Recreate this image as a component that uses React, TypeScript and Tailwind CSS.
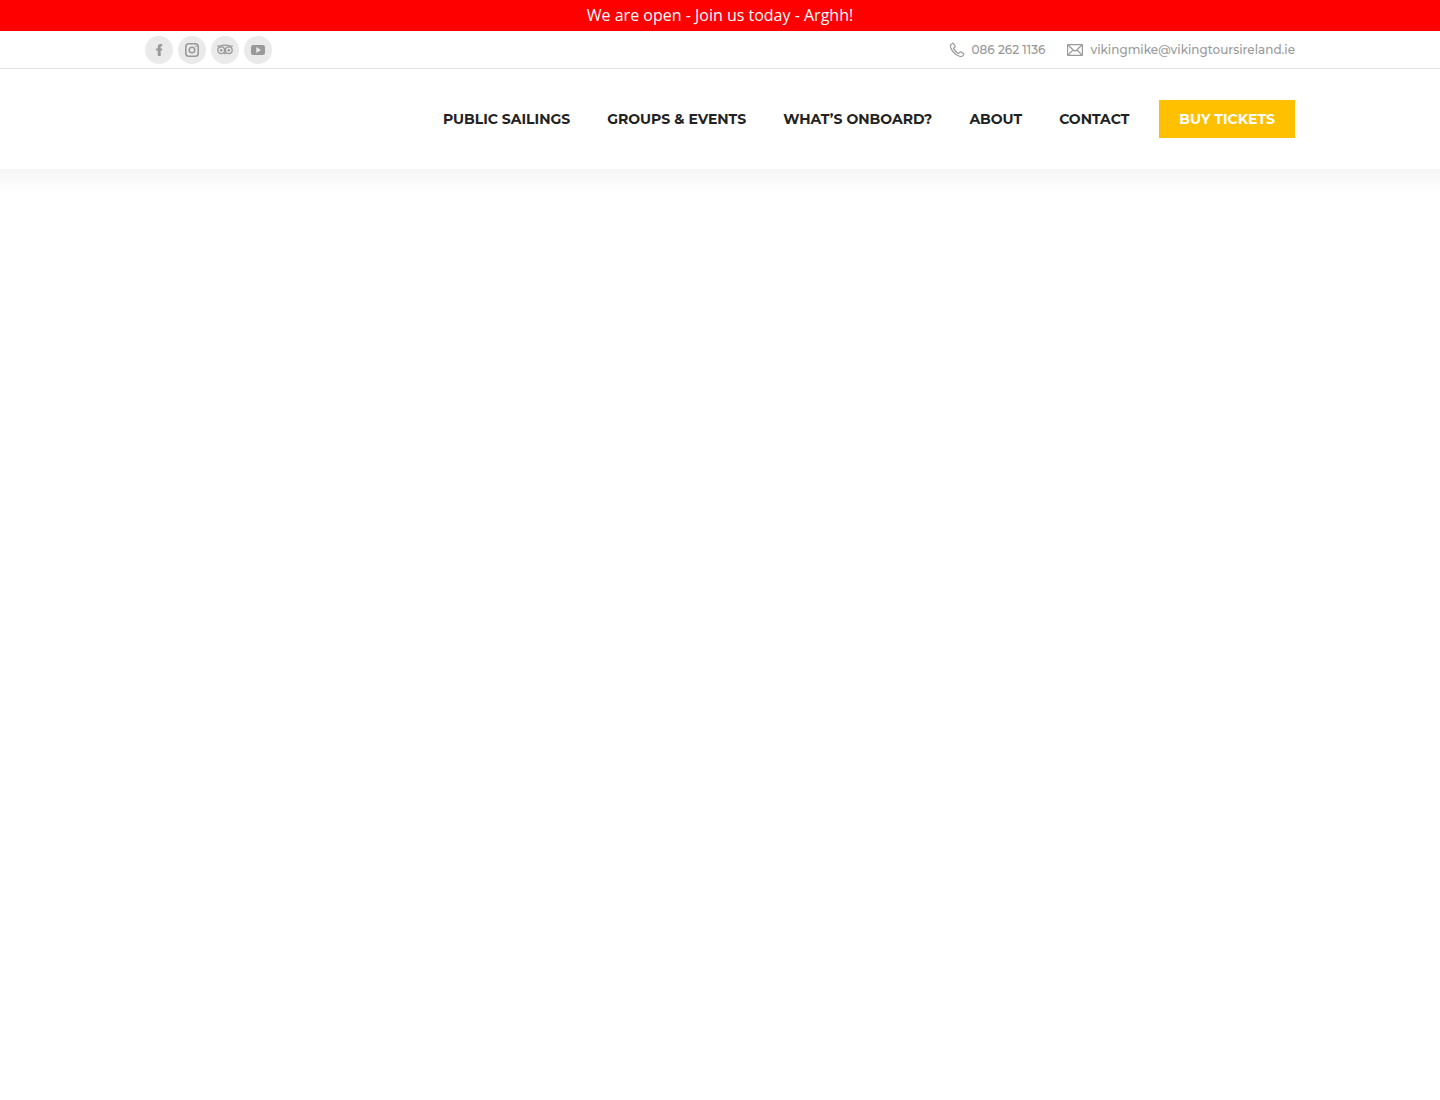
import type { ReactNode } from "react";

interface SocialLink {
  label: string;
  href: string;
  icon: ReactNode;
}

const socialLinks: SocialLink[] = [
  {
    label: "Facebook",
    href: "#facebook",
    icon: (
      <path
        fill="currentColor"
        d="M9.7 8.6V14H6.8V8.600H5V6.400h1.800V5.200C6.800 3 7.700 2 9.700 2H11.200v2.200H10.300c-.6 0-.7.3-.7.8v1.400h1.700l-.3 2.200z"
      />
    ),
  },
  {
    label: "Instagram",
    href: "#instagram",
    icon: (
      <>
        <rect x="1.8" y="1.8" width="12.4" height="12.4" rx="3" fill="none" stroke="currentColor" strokeWidth="1.6" />
        <circle cx="8" cy="8" r="2.8" fill="none" stroke="currentColor" strokeWidth="1.5" />
        <circle cx="11.8" cy="4.3" r="0.8" fill="currentColor" />
      </>
    ),
  },
  {
    label: "TripAdvisor",
    href: "#tripadvisor",
    icon: (
      <>
        <g fill="none" stroke="currentColor" strokeWidth="1.3">
          <circle cx="4.2" cy="8.2" r="3.4" />
          <circle cx="11.8" cy="8.2" r="3.4" />
          <path d="M.2 4.200h2.800C6 3 10 3 13 4.200h2.800" />
        </g>
        <circle cx="4.2" cy="8.2" r="1.3" fill="currentColor" />
        <circle cx="11.8" cy="8.2" r="1.3" fill="currentColor" />
        <path d="m6.600 10.800 1.400 2 1.400-2z" fill="currentColor" />
      </>
    ),
  },
  {
    label: "YouTube",
    href: "#youtube",
    icon: (
      <path
        fill="currentColor"
        fillRule="evenodd"
        d="M3.500 3h9C14.300 3 15 3.900 15 5.500v5c0 1.700-.7 2.500-2.500 2.500h-9C1.700 13 1 12.200 1 10.500v-5C1 3.900 1.700 3 3.500 3zM6.300 5v6L11 8z"
      />
    ),
  },
];

const navLinks = [
  { label: "Public Sailings", href: "#public-sailings" },
  { label: "Groups & Events", href: "#groups-events" },
  { label: "What’s Onboard?", href: "#whats-onboard" },
  { label: "About", href: "#about" },
  { label: "Contact", href: "#contact" },
];

function PhoneIcon() {
  return (
    <svg viewBox="0 0 16 16" className="size-4" fill="none" stroke="currentColor" strokeWidth="1.2" strokeLinejoin="round" aria-hidden="true">
      <path d="M3.200 1.400c.6-.4 1-.2 1.400.4l1.300 2c.4.600.3 1.100-.3 1.500l-.8.600c-.3.300-.3.600-.1 1 1.100 1.900 2.500 3.200 4.400 4.300.4.200.7.200 1-.1l.6-.8c.4-.6.900-.7 1.500-.3l2 1.300c.6.400.7.800.4 1.400-.9 1.600-2.300 2.200-4.100 1.600C6.200 12.700 3.200 9.700 1.600 5.500 1 3.700 1.600 2.300 3.200 1.400z" />
    </svg>
  );
}

function MailIcon() {
  return (
    <svg viewBox="0 0 16 16" className="size-4" fill="none" stroke="currentColor" strokeWidth="1.2" strokeLinejoin="round" aria-hidden="true">
      <rect x="0.600" y="2.600" width="14.800" height="10.800" rx="0.500" />
      <path d="m1 3 5.500 5.300c1 .9 2 .9 3 0L15 3M1 13l5-5M15 13l-5-5" />
    </svg>
  );
}

export default function App() {
  return (
    <div className="min-h-screen bg-white font-['Montserrat','Inter',sans-serif]">
      <p className="bg-[#ff0000] pb-px text-center font-['Open_Sans',sans-serif] text-base leading-[30px] text-white">
        We are open - Join us today - Arghh!
      </p>

      <header>
        <div className="border-b border-[#e2e2e2]">
          <div className="mx-auto flex min-h-[37px] max-w-[1250px] flex-wrap items-center justify-between px-[50px] text-[#999999]">
            <ul className="flex gap-[5px]">
              {socialLinks.map((link) => (
                <li key={link.label}>
                  <a
                    href={link.href}
                    aria-label={link.label}
                    className="flex size-7 items-center justify-center rounded-full bg-[#eaeaea]"
                  >
                    <svg viewBox="0 0 16 16" className="size-4" aria-hidden="true">
                      {link.icon}
                    </svg>
                  </a>
                </li>
              ))}
            </ul>
            <div className="flex flex-wrap gap-x-[22px] text-xs leading-5 font-medium">
              <a href="tel:0862621136" className="flex items-center gap-[7px]">
                <PhoneIcon />
                086 262 1136
              </a>
              <a href="mailto:vikingmike@vikingtoursireland.ie" className="flex items-center gap-[7px]">
                <MailIcon />
                vikingmike@vikingtoursireland.ie
              </a>
            </div>
          </div>
        </div>

        <div className="mx-auto flex min-h-[100px] max-w-[1250px] flex-wrap items-center justify-end gap-x-[30px] px-[50px] text-sm font-bold uppercase">
          <nav aria-label="Main">
            <ul className="flex flex-wrap gap-x-[37px] text-[#222222]">
              {navLinks.map((link) => (
                <li key={link.label}>
                  <a href={link.href}>{link.label}</a>
                </li>
              ))}
            </ul>
          </nav>
          <a href="#tickets" className="bg-[#ffc000] px-5 py-[9px] text-white">
            Buy Tickets
          </a>
        </div>
        {/* soft edge under the header */}
        <div className="h-6 bg-linear-to-b from-black/4 to-transparent" />
      </header>
    </div>
  );
}
